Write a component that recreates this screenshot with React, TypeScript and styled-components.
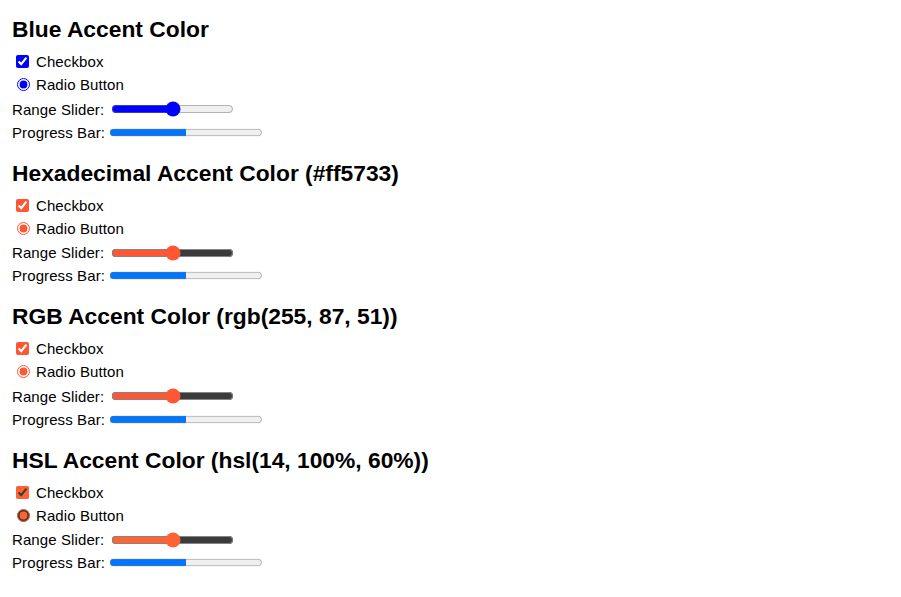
import React from 'react';
import styled, { createGlobalStyle } from 'styled-components';

const GlobalStyle = createGlobalStyle`
    body {
        margin: 0;
        background: #fff;
        color: #000;
        font-family: "Liberation Sans", Arial, sans-serif;
        font-size: 15px;
    }
`;

const sections = [
    { title: 'Blue Accent Color', accent: 'blue' },
    { title: 'Hexadecimal Accent Color (#ff5733)', accent: '#ff5733' },
    { title: 'RGB Accent Color (rgb(255, 87, 51))', accent: 'rgb(255, 87, 51)' },
    { title: 'HSL Accent Color (hsl(14, 100%, 60%))', accent: 'hsl(14, 100%, 60%)' },
];

export default function App() {
    return (
        <>
            <GlobalStyle />
            <Page>
                {sections.map((s, i) => (
                    <Section key={i}>
                        <Title>{s.title}</Title>
                        <Row $h={23}>
                            <Check type="checkbox" defaultChecked $accent={s.accent} />
                            <Text $gap={4}>Checkbox</Text>
                        </Row>
                        <Row $h={23}>
                            <Radio type="radio" name={`radio-${i}`} defaultChecked $accent={s.accent} />
                            <Text $gap={3}>Radio Button</Text>
                        </Row>
                        <Row $h={26}>
                            <Text>Range Slider:</Text>
                            <Range type="range" min={0} max={100} defaultValue={50} $accent={s.accent} />
                        </Row>
                        <Row $h={20}>
                            <Text>Progress Bar:</Text>
                            <Progress value={50} max={100} />
                        </Row>
                    </Section>
                ))}
            </Page>
        </>
    );
}

const Page = styled.div`
    display: flex;
    flex-direction: column;
    padding: 16px 12px;
`;

const Section = styled.section`
    display: flex;
    flex-direction: column;
    margin-bottom: 17.5px;
`;

const Title = styled.h2`
    margin: 0 0 8px;
    font-size: 22.8px;
    line-height: 26px;
    font-weight: bold;
`;

const Row = styled.div<{ $h: number }>`
    display: flex;
    align-items: center;
    height: ${p => p.$h}px;
`;

const Text = styled.span<{ $gap?: number }>`
    margin-left: ${p => p.$gap ?? 0}px;
    line-height: 17px;
    letter-spacing: 0.1px;
`;

const Check = styled.input<{ $accent: string }>`
    accent-color: ${p => p.$accent};
    width: 13px;
    height: 13px;
    margin: 0 3px 0 4px;
`;

const Radio = styled.input<{ $accent: string }>`
    accent-color: ${p => p.$accent};
    width: 13px;
    height: 13px;
    margin: 0 3px 0 5px;
`;

const Range = styled.input<{ $accent: string }>`
    accent-color: ${p => p.$accent};
    width: 123px;
    margin: 0 2px 0 7px;
`;

const Progress = styled.progress`
    margin-left: 5px;
    width: 152px;
    height: 15px;
`;
